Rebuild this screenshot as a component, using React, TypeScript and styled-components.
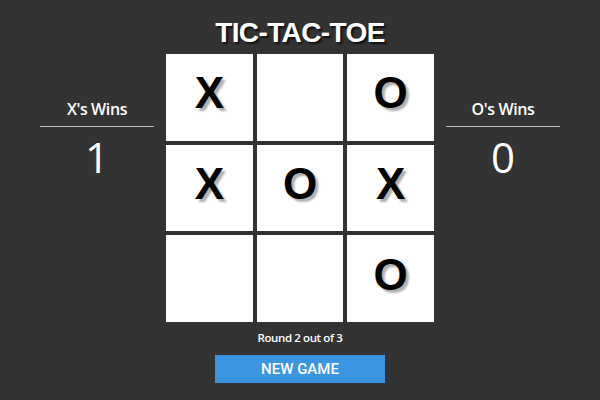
import React from "react";
import styled, { createGlobalStyle } from "styled-components";

const GlobalStyle = createGlobalStyle`
  html, body {
    margin: 0;
    padding: 0;
    background: #333333;
  }
  * {
    box-sizing: border-box;
  }
`;

const Page = styled.div`
  width: 600px;
  height: 400px;
  display: flex;
  flex-direction: column;
  align-items: center;
  font-family: "Open Sans", "Liberation Sans", sans-serif;
  color: #ffffff;
`;

const Title = styled.h1`
  margin: 16px 0 0;
  height: 38px;
  font-family: "Liberation Sans", Arial, sans-serif;
  font-size: 28px;
  line-height: 34px;
  font-weight: 700;
  letter-spacing: -0.6px;
  color: #ffffff;
  text-shadow: 2px 2px 2px rgba(0, 0, 0, 0.7);
`;

const Main = styled.div`
  display: flex;
  align-items: flex-start;
  gap: 12px;
`;

const ScorePanel = styled.div`
  width: 114px;
  margin-top: 44px;
  display: flex;
  flex-direction: column;
  align-items: center;
`;

const ScoreLabel = styled.div`
  width: 100%;
  padding-bottom: 6px;
  border-bottom: 1px solid #bdbdbd;
  text-align: center;
  font-size: 16px;
  font-weight: 600;
  line-height: 22px;
  letter-spacing: -0.4px;
`;

const ScoreValue = styled.div`
  margin-top: 6px;
  font-size: 42px;
  font-weight: 400;
  line-height: 48px;
`;

const Board = styled.div`
  width: 268px;
  height: 268px;
  display: grid;
  grid-template-columns: repeat(3, 1fr);
  grid-template-rows: repeat(3, 1fr);
  gap: 4px;
`;

const Cell = styled.div`
  background: #ffffff;
  display: flex;
  align-items: center;
  justify-content: center;
  padding-bottom: 8px;
  font-family: "Liberation Sans", Arial, sans-serif;
  font-size: 44px;
  font-weight: 700;
  color: #000000;
  text-shadow: 3px 3px 2px #b0b0b0;
`;

const RoundInfo = styled.div`
  margin-top: 6px;
  font-size: 11.5px;
  font-weight: 600;
  line-height: 20px;
  letter-spacing: -0.4px;
`;

const NewGameButton = styled.button`
  margin-top: 7px;
  width: 170px;
  height: 28px;
  border: none;
  background: #3b95e1;
  color: #ffffff;
  font-family: Roboto, "Liberation Sans", Arial, sans-serif;
  font-size: 15px;
  font-weight: 500;
  cursor: pointer;
`;

const board = ["X", "", "O", "X", "O", "X", "", "", "O"];

export default function App() {
  return (
    <>
      <GlobalStyle />
      <Page>
        <Title>TIC-TAC-TOE</Title>
        <Main>
          <ScorePanel>
            <ScoreLabel>X's Wins</ScoreLabel>
            <ScoreValue>1</ScoreValue>
          </ScorePanel>
          <Board>
            {board.map((mark, i) => (
              <Cell key={i}>{mark}</Cell>
            ))}
          </Board>
          <ScorePanel>
            <ScoreLabel>O's Wins</ScoreLabel>
            <ScoreValue>0</ScoreValue>
          </ScorePanel>
        </Main>
        <RoundInfo>Round 2 out of 3</RoundInfo>
        <NewGameButton>NEW GAME</NewGameButton>
      </Page>
    </>
  );
}
